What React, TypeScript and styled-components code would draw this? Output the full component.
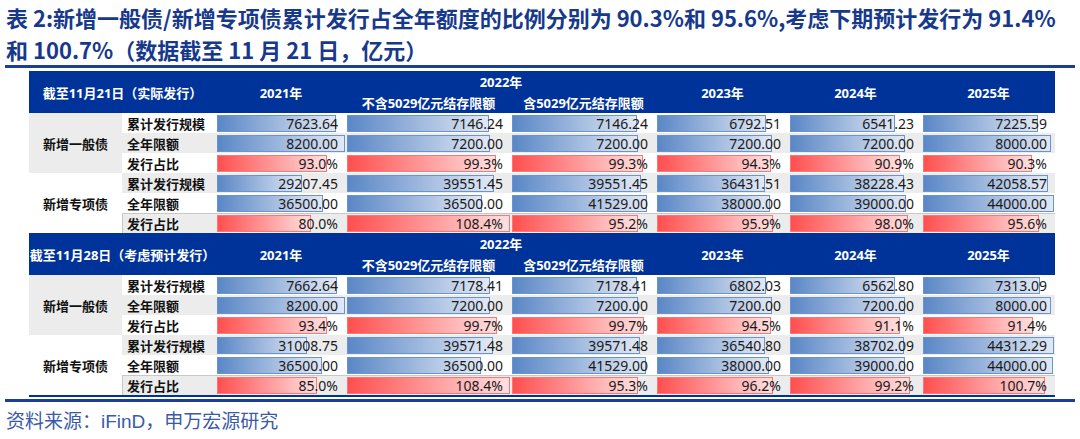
import React from "react";
import styled, { createGlobalStyle } from "styled-components";

const GlobalStyle = createGlobalStyle`
  html, body {
    margin: 0;
    padding: 0;
    background: #ffffff;
  }
  body {
    font-family: "Noto Sans", "Noto Sans CJK SC", sans-serif;
  }
`;

type Row = { label: string; kind: "amount" | "ratio"; values: number[] };
type Group = { name: string; shade: boolean; rows: Row[] };
type Block = { title: string; groups: Group[] };

const blocks: Block[] = [
  {
    title: "截至11月21日（实际发行）",
    groups: [
      {
        name: "新增一般债",
        shade: true,
        rows: [
          { label: "累计发行规模", kind: "amount", values: [7623.64, 7146.24, 7146.24, 6792.51, 6541.23, 7225.59] },
          { label: "全年限额", kind: "amount", values: [8200, 7200, 7200, 7200, 7200, 8000] },
          { label: "发行占比", kind: "ratio", values: [93.0, 99.3, 99.3, 94.3, 90.9, 90.3] },
        ],
      },
      {
        name: "新增专项债",
        shade: false,
        rows: [
          { label: "累计发行规模", kind: "amount", values: [29207.45, 39551.45, 39551.45, 36431.51, 38228.43, 42058.57] },
          { label: "全年限额", kind: "amount", values: [36500, 36500, 41529, 38000, 39000, 44000] },
          { label: "发行占比", kind: "ratio", values: [80.0, 108.4, 95.2, 95.9, 98.0, 95.6] },
        ],
      },
    ],
  },
  {
    title: "截至11月28日（考虑预计发行）",
    groups: [
      {
        name: "新增一般债",
        shade: true,
        rows: [
          { label: "累计发行规模", kind: "amount", values: [7662.64, 7178.41, 7178.41, 6802.03, 6562.8, 7313.09] },
          { label: "全年限额", kind: "amount", values: [8200, 7200, 7200, 7200, 7200, 8000] },
          { label: "发行占比", kind: "ratio", values: [93.4, 99.7, 99.7, 94.5, 91.1, 91.4] },
        ],
      },
      {
        name: "新增专项债",
        shade: false,
        rows: [
          { label: "累计发行规模", kind: "amount", values: [31008.75, 39571.48, 39571.48, 36540.8, 38702.09, 44312.29] },
          { label: "全年限额", kind: "amount", values: [36500, 36500, 41529, 38000, 39000, 44000] },
          { label: "发行占比", kind: "ratio", values: [85.0, 108.4, 95.3, 96.2, 99.2, 100.7] },
        ],
      },
    ],
  },
];

const COLUMNS = "93px 94px 130px 165px 145px 133px 133px 133px";

const BlockTable = ({ block }: { block: Block }) => {
  const ratioMax = Math.max(
    ...block.groups.flatMap((g) => g.rows.filter((r) => r.kind === "ratio").flatMap((r) => r.values))
  );

  return (
    <>
      <HeaderGrid>
        <HeadCell $col="1 / 3" $row="1 / 3">{block.title}</HeadCell>
        <HeadCell $col="3" $row="1 / 3">2021年</HeadCell>
        <HeadCell $col="4 / 6" $row="1">2022年</HeadCell>
        <HeadCell $col="4" $row="2">不含5029亿元结存限额</HeadCell>
        <HeadCell $col="5" $row="2">含5029亿元结存限额</HeadCell>
        <HeadCell $col="6" $row="1 / 3">2023年</HeadCell>
        <HeadCell $col="7" $row="1 / 3">2024年</HeadCell>
        <HeadCell $col="8" $row="1 / 3">2025年</HeadCell>
      </HeaderGrid>
      <BodyGrid>
        {block.groups.map((group, gi) => {
          const amountMax = Math.max(
            ...group.rows.filter((r) => r.kind === "amount").flatMap((r) => r.values)
          );
          return (
            <React.Fragment key={group.name + gi}>
              <GroupCell $shade={group.shade}>{group.name}</GroupCell>
              {group.rows.map((row, ri) => {
                const rowIndex = gi * 3 + ri;
                const shade = rowIndex % 2 === 1;
                const boxed = gi === 1 && ri === 2;
                return (
                  <React.Fragment key={row.label + ri}>
                    <LabelCell $shade={shade} $boxed={boxed}>
                      {row.label}
                    </LabelCell>
                    {row.values.map((v, ci) => {
                      const frac = v / (row.kind === "ratio" ? ratioMax : amountMax);
                      return (
                        <DataCell key={ci} $shade={shade} $boxed={boxed}>
                          <Bar $tone={row.kind} style={{ width: `calc(${frac} * (100% - 2px))` }} />
                          <Value>{row.kind === "ratio" ? `${v.toFixed(1)}%` : v.toFixed(2)}</Value>
                        </DataCell>
                      );
                    })}
                  </React.Fragment>
                );
              })}
            </React.Fragment>
          );
        })}
      </BodyGrid>
    </>
  );
};

const App = () => {
  return (
    <Page>
      <GlobalStyle />
      <Title>
        <TitleLine>表 2:新增一般债/新增专项债累计发行占全年额度的比例分别为 90.3%和 95.6%,考虑下期预计发行为 91.4%</TitleLine>
        <TitleLine>和 100.7%（数据截至 11 月 21 日，亿元）</TitleLine>
      </Title>
      <Table>
        {blocks.map((b) => (
          <BlockTable key={b.title} block={b} />
        ))}
      </Table>
      <BottomRule />
      <Source>资料来源：iFinD，申万宏源研究</Source>
    </Page>
  );
};

const Page = styled.main`
  width: 1070px;
  margin: 0 5px;
`;

const Title = styled.div`
  height: 63px;
  padding: 2px 0 0 1px;
  border-bottom: 3px solid #1c3f94;
  color: #17398c;
  font-family: "Noto Sans CJK SC", sans-serif;
  font-size: 22px;
  font-weight: 700;
  line-height: 31.5px;
`;

const TitleLine = styled.div`
  white-space: nowrap;
`;

const Table = styled.section`
  width: 1026px;
  margin: 3px 0 0 24px;
  border-bottom: 2px solid #003399;
`;

const HeaderGrid = styled.div`
  display: grid;
  grid-template-columns: ${COLUMNS};
  grid-template-rows: 21px 21px;
  background: #003399;
`;

const HeadCell = styled.div<{ $col: string; $row: string }>`
  grid-column: ${(p) => p.$col};
  grid-row: ${(p) => p.$row};
  display: flex;
  align-items: center;
  justify-content: center;
  white-space: nowrap;
  color: #ffffff;
  font-size: 13px;
  font-weight: 700;
`;

const BodyGrid = styled.div`
  display: grid;
  grid-template-columns: ${COLUMNS};
  grid-auto-rows: 20px;
`;

const GroupCell = styled.div<{ $shade: boolean }>`
  grid-row: span 3;
  display: flex;
  align-items: center;
  justify-content: center;
  background: ${(p) => (p.$shade ? "#ececec" : "#ffffff")};
  color: #111111;
  font-size: 13px;
  font-weight: 700;
`;

const LabelCell = styled.div<{ $shade: boolean; $boxed: boolean }>`
  display: flex;
  align-items: center;
  padding-left: 4px;
  background: ${(p) => (p.$shade ? "#ececec" : "#ffffff")};
  border-top: 1px solid ${(p) => (p.$boxed ? "#c8c8c8" : "transparent")};
  border-left: 1px solid ${(p) => (p.$boxed ? "#c8c8c8" : "transparent")};
  color: #111111;
  font-size: 13px;
  font-weight: 700;
  white-space: nowrap;
`;

const DataCell = styled.div<{ $shade: boolean; $boxed: boolean }>`
  display: grid;
  background: ${(p) => (p.$shade ? "#ececec" : "#ffffff")};
  border-top: 1px solid ${(p) => (p.$boxed ? "#c8c8c8" : "transparent")};
  > * {
    grid-area: 1 / 1;
  }
`;

const Bar = styled.div<{ $tone: "amount" | "ratio" }>`
  justify-self: start;
  box-sizing: border-box;
  margin: 1px 0 1px 1px;
  border: 1px solid ${(p) => (p.$tone === "ratio" ? "#ff7474" : "#6a93d0")};
  background: ${(p) =>
    p.$tone === "ratio"
      ? "linear-gradient(to right, #ff4f4f, #ffe0e0)"
      : "linear-gradient(to right, #5a87c6, #e2e9f5)"};
`;

const Value = styled.div`
  justify-self: end;
  align-self: center;
  padding-right: 8px;
  color: #1a1a1a;
  font-size: 14px;
  line-height: 18px;
`;

const BottomRule = styled.div`
  height: 3px;
  margin-top: 2px;
  background: #1c3f94;
`;

const Source = styled.div`
  margin-top: 8px;
  padding-left: 1px;
  color: #3a5aa6;
  font-family: "Liberation Sans", "Noto Sans CJK SC", sans-serif;
  font-size: 19px;
  line-height: 24px;
  white-space: nowrap;
`;

export default App;
